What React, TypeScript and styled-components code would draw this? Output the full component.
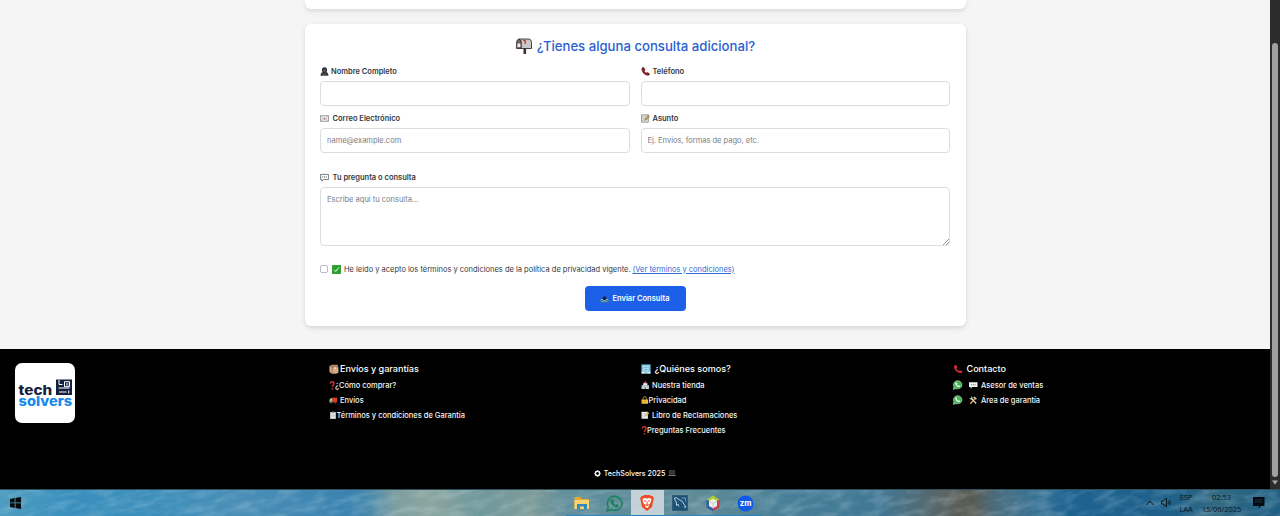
import React from "react";
import styled, { createGlobalStyle } from "styled-components";

const GlobalStyle = createGlobalStyle`
  * { box-sizing: border-box; }
  body { margin: 0; overflow: hidden; font-family: Inter, "Liberation Sans", sans-serif; }
  #root { height: 516px; }
`;

const Desktop = styled.div`
  display: flex;
  flex-direction: column;
  width: 1280px;
  height: 516px;
  overflow: hidden;
`;

const BrowserView = styled.div`
  display: flex;
  height: 489px;
`;

const Page = styled.main`
  display: flex;
  flex-direction: column;
  width: 1270px;
  height: 489px;
  overflow: hidden;
  background: #f5f5f5;
`;

const PreviousCard = styled.section`
  flex: none;
  width: 661px;
  height: 9px;
  margin: 0 0 15px 305px;
  background: #fff;
  border-radius: 0 0 6px 6px;
  box-shadow: 0 2px 5px rgba(0, 0, 0, 0.12);
`;

const FormCard = styled.section`
  flex: none;
  width: 661px;
  height: 302px;
  margin-left: 305px;
  padding: 11px 16px 0 15px;
  background: #fff;
  border-radius: 6px;
  box-shadow: 0 2px 5px rgba(0, 0, 0, 0.13);
`;

const FormTitle = styled.h2`
  display: flex;
  align-items: center;
  justify-content: center;
  gap: 5px;
  height: 21px;
  margin: 0 0 6px;
  padding-left: 1px;
  font-size: 13.15px;
  font-weight: 500;
  color: #2b5fd0;
  white-space: nowrap;
`;

const Fields = styled.div`
  display: grid;
  grid-template-columns: 1fr 1fr;
  column-gap: 11px;
`;

const Field = styled.label<{ $gap?: number }>`
  display: flex;
  flex-direction: column;
  margin-bottom: ${(p) => p.$gap ?? 3}px;
`;

const Caption = styled.span<{ $gap: number }>`
  display: flex;
  align-items: center;
  gap: ${(p) => p.$gap}px;
  height: 19px;
  padding-bottom: 1px;
  font-size: 7.5px;
  font-weight: 600;
  color: #34383d;
  white-space: nowrap;
`;

const Input = styled.input`
  height: 25px;
  padding: 0 6px;
  border: 1px solid #dadde0;
  border-radius: 4px;
  outline: none;
  background: #fff;
  font: 400 7.5px Inter, sans-serif;
  &::placeholder { color: #777d84; opacity: 1; }
`;

const TextArea = styled.textarea`
  height: 59px;
  padding: 6px;
  border: 1px solid #dadde0;
  border-radius: 4px;
  outline: none;
  resize: none;
  background: #fff;
  font: 400 7.5px/11px Inter, sans-serif;
  &::placeholder { color: #777d84; opacity: 1; }
`;

const AreaWrap = styled.div`
  position: relative;
  display: grid;
`;

const Grip = styled.svg`
  position: absolute;
  right: 1px;
  bottom: 1px;
`;

const Consent = styled.div`
  display: flex;
  align-items: center;
  height: 16px;
  margin-top: 15px;
  font-size: 7.5px;
  color: #33373b;
  white-space: nowrap;
`;

const CheckBox = styled.input`
  appearance: none;
  width: 8px;
  height: 8px;
  margin: 0 4px 0 0;
  border: 1px solid #b9bcc0;
  border-radius: 2px;
  background: #fff;
`;

const ConsentText = styled.span`
  margin-left: 3px;
`;

const TermsLink = styled.a`
  margin-left: 2px;
  color: #3069d4;
  text-decoration: underline;
`;

const SubmitButton = styled.button`
  display: flex;
  align-items: center;
  justify-content: center;
  gap: 3px;
  width: 101px;
  height: 25px;
  margin: 9px auto 0;
  padding: 0;
  border: 0;
  border-radius: 4px;
  background: #1d60e8;
  color: #fff;
  font: 600 7.5px Inter, sans-serif;
`;

const Footer = styled.footer`
  flex: none;
  display: flex;
  flex-direction: column;
  justify-content: space-between;
  height: 140px;
  margin-top: 23px;
  padding-top: 11.5px;
  background: #000;
  color: #fff;
`;

const FooterColumns = styled.div`
  display: grid;
  grid-template-columns: 313px 312px 312px 1fr;
  padding-left: 15.5px;
`;

const FooterColumn = styled.div`
  display: flex;
  flex-direction: column;
`;

const FooterHeading = styled.h3<{ $gap: number }>`
  display: flex;
  align-items: center;
  gap: ${(p) => p.$gap}px;
  height: 16px;
  margin: 0 0 1px;
  font-size: 9.05px;
  font-weight: 500;
  white-space: nowrap;
`;

const FooterLink = styled.a<{ $gap: number }>`
  display: flex;
  align-items: center;
  gap: ${(p) => p.$gap}px;
  height: 15.2px;
  color: #f4f4f4;
  font-size: 7.5px;
  font-weight: 500;
  white-space: nowrap;
`;

const Logo = styled.div`
  width: 60px;
  height: 60px;
  margin: 2.5px 0 0 -0.5px;
  border-radius: 7px;
  background: #fff;
`;

const Copyright = styled.div`
  display: flex;
  align-items: center;
  justify-content: center;
  gap: 3px;
  height: 14px;
  margin-bottom: 9px;
  font-size: 7.1px;
  font-weight: 500;
`;

const ScrollTrack = styled.div`
  display: flex;
  flex-direction: column;
  align-items: center;
  width: 10px;
  height: 489px;
  background: #2c2c2c;
`;

const ScrollThumb = styled.div`
  width: 6px;
  height: 434px;
  margin: 43px 0 3px;
  border-radius: 3px;
  background: #9f9f9f;
`;

const TaskBar = styled.div`
  position: relative;
  display: flex;
  height: 27px;
  border-top: 1px solid #31505f;
  background: linear-gradient(90deg, #4f9dc0 0, #398fbd 70px, #3f8fbb 170px, #4b8fb7 240px, #3a82b0 350px,
    #4a8aab 370px, #7d9fa0 395px, #8ba59f 430px, #6f989d 480px, #7f9c9a 530px, #5f8d9b 570px,
    #5f8a97 700px, #477f98 790px, #417794 880px, #5b6464 945px, #59594f 970px, #496f82 1000px,
    #3a7394 1035px, #1d6391 1070px, #1f6089 1180px, #346a82 1215px, #1e5e84 1280px);
`;

const Water = styled.svg`
  position: absolute;
  inset: 0;
`;

const Apps = styled.div`
  position: relative;
  display: flex;
  margin-left: 566px;
`;

const AppSlot = styled.div<{ $active?: boolean }>`
  display: flex;
  align-items: center;
  justify-content: center;
  width: 32.6px;
  height: 26px;
  background: ${(p) => (p.$active ? "rgba(225,232,235,0.75)" : "transparent")};
  box-shadow: ${(p) => (p.$active ? "inset 0 -1px #2581cf" : "inset 0 -1px rgba(30,125,200,0.75)")};
`;

const StartSlot = styled.div`
  position: absolute;
  left: 10px;
  top: 7px;
  display: flex;
`;

const Tray = styled.div`
  position: relative;
  display: flex;
  align-items: center;
  margin-left: auto;
  padding-right: 15px;
  color: #0b151b;
`;

const TrayText = styled.div<{ $width: number; $gap?: number }>`
  display: flex;
  flex-direction: column;
  align-items: center;
  width: ${(p) => p.$width}px;
  margin: -1px 0 0 ${(p) => p.$gap ?? 0}px;
  font: 400 7.4px/12px "Open Sans", sans-serif;
  white-space: nowrap;
`;

const drawings: Record<string, React.ReactNode> = {
  mailbox: (
    <>
      <path d="M7.500 10h2.600v6H7.500z" fill="#3d302a" />
      <path d="M3 1h10q2.500.5 2.500 3.500v6H5V4.500Q5 1.500 3 1z" fill="#c9c7c5" stroke="#34302f" strokeWidth=".9" />
      <path d="M3 1Q.6 1.500.6 4.500v6H5v-6Q5 1.500 3 1z" fill="#6b6462" stroke="#34302f" strokeWidth=".9" />
      <path d="M1.400 5.500h3v3.600h-3z" fill="#eee" />
      <path d="M7 3V1.800h3v4H8.400V3z" fill="#d84335" />
    </>
  ),
  person: (
    <>
      <path d="M3.400 7Q2.800.5 8 .5T12.600 7L11 9.500H5z" fill="#2b2d30" />
      <path d="M6 4.500h4v3L8 9 6 7.500z" fill="#64686c" />
      <path d="M1 15.500q0-6 5-6.500h4q5 .5 5 6.500z" fill="#2c3034" />
      <path d="m4 11.500 4 1.500 4-1.500M2 14.800h12" stroke="#767b80" fill="none" />
    </>
  ),
  phone: (
    <path
      d="M2 1.500 5 1l2.300 4.200-1.800 1.700Q7 9.500 9.500 11l1.800-1.500L15 12l-1 2.500Q9 16 4 10.500 0 5.500 2 1.500z"
      fill="#a51c27"
      stroke="#3f1115"
      strokeWidth="1"
    />
  ),
  redphone: (
    <path d="M2 2 5 1.500l2 4-1.700 1.600Q7 9.700 9.300 11.200l1.900-1.400L15 12l-1 2.400Q8.500 15.500 4 10.500.5 5.500 2 2z" fill="#d7282f" />
  ),
  envelope: (
    <>
      <path d="M.8 3h14.400v10H.8z" fill="#eceef0" stroke="#707377" strokeWidth="1.200" />
      <path d="m1 12.500 5-4M15 12.500l-5-4M1 3.500l7 5 7-5" fill="none" stroke="#a5a8ad" />
      <path d="M6.700 7.200h2.800v2.600H6.700z" fill="#ca5961" />
    </>
  ),
  memo: (
    <>
      <path d="M1 1.500h12v13H1z" fill="#e8e8e1" stroke="#686b68" strokeWidth="1.200" />
      <path d="M3 5h7M3 8h5M3 11h4" stroke="#999c9b" />
      <path d="m7 11 1-3 5-6 2.200 2-5 6z" fill="#d3a64c" stroke="#494236" strokeWidth=".7" />
    </>
  ),
  memoLight: (
    <>
      <path d="M1 1.500h12v13H1z" fill="#f1f1ec" />
      <path d="M3 5h7M3 8h5M3 11h4" stroke="#a5a8a8" />
      <path d="m7 11 1-3 5-6 2.200 2-5 6z" fill="#dca85a" />
    </>
  ),
  chat: (
    <>
      <path d="M1 2.500h14v9H6L3 14.500v-3H1z" fill="#fff" stroke="#4c5055" strokeWidth="1.300" />
      <path d="M4 6.200h1.800V8H4zM7.100 6.200h1.800V8H7.100zM10.200 6.200H12V8h-1.800z" fill="#4c5055" />
    </>
  ),
  check: (
    <>
      <path d="M.5.5h15v15H.5z" fill="#20a825" stroke="#176d1b" />
      <path d="m4 8.500 2.500 3L12 4.500" stroke="#fff" strokeWidth="1.700" fill="none" />
    </>
  ),
  outbox: (
    <>
      <path d="m2 9-1 2v3.500h14V11l-1-2z" fill="#7dbcd2" />
      <path d="M1 11h4l1 1.500h4L11 11h4v3.500H1z" fill="#28576d" />
      <path d="M8 3 3 8.500h2.500v2.500h5V8.500H13z" fill="#142742" />
      <path d="M2.500 13h11" stroke="#b8e5f2" />
    </>
  ),
  box: (
    <>
      <path d="M1 3 5 1h9l1 10-3 4H4l-3-2z" fill="#b8906b" />
      <path d="m1 3 4 2h10v9l-3 1H5l-4-3z" fill="#d4ab85" />
      <path d="M5 5v10M1 3l4 2h10" stroke="#80614c" fill="none" />
      <path d="M8.500 5h3v3h-3z" fill="#efd8b8" />
    </>
  ),
  question: (
    <>
      <path d="M2.500 4.500Q3 1.200 6 1.200t3.200 3C9.200 7 6.200 7 6.200 10.700" stroke="#d1342c" strokeWidth="2.500" fill="none" />
      <path d="M4.900 12.400h2.700v2.700H4.900z" fill="#d1342c" />
    </>
  ),
  truck: (
    <>
      <path d="M6 3h9.500v9H6z" fill="#dd3b20" />
      <path d="m1 7 2-3h3v8H1z" fill="#b1cabe" />
      <path d="M1 9h5v3H1z" fill="#779a4f" />
      <circle cx="4" cy="12.500" r="1.700" fill="#555" />
      <circle cx="12" cy="12.500" r="1.700" fill="#555" />
    </>
  ),
  clipboard: (
    <>
      <path d="M2 1.500h12v14H2z" fill="#b3a397" />
      <path d="M3.500 3h9v11.300h-9z" fill="#ecece9" />
      <path d="M6 .5h4v3H6z" fill="#888" />
      <path d="M5 6h6M5 8.500h6M5 11h6" stroke="#aaa" />
    </>
  ),
  office: (
    <>
      <path d="M.7.700h14.600v14.600H.7z" fill="#79c7e7" />
      <path d="M4 3h8v12H4z" fill="#c9e8f3" />
      <path d="M4 5.500h8M4 8.500h8M4 11.500h8M8 3v12" stroke="#5fa9cb" />
      <path d="M1 12.500h3v2.500H1zM12 12.500h3v2.500h-3z" fill="#e7f3f7" />
    </>
  ),
  store: (
    <>
      <path d="M1 8h14v7H1z" fill="#c7d7de" />
      <path d="M4 4h8v11H4z" fill="#eceaf0" />
      <path d="M6.500 1h3.500v3H6.500z" fill="#df5967" />
      <path d="M1 8.500h14M3 11.500h10" stroke="#6c8ba0" />
      <path d="M6.500 12h3v3h-3z" fill="#4e6b88" />
    </>
  ),
  lock: (
    <>
      <path d="M4 7V4.500Q4 1 7.500 1T11 4.500V7" stroke="#c39a39" strokeWidth="1.800" fill="none" />
      <path d="M1 6.500h13v8.500H1z" fill="#f4bd34" />
      <path d="M7 9h1.500v3H7z" fill="#c18a21" />
    </>
  ),
  talk: (
    <>
      <path d="M0 2.500h16v9H6L3 14.500v-3H0z" fill="#f5f5f5" />
      <path d="M4 6.200h1.600v1.600H4zM7.200 6.200h1.600v1.600H7.200zM10.400 6.200H12v1.600h-1.600z" fill="#555" />
    </>
  ),
  tools: (
    <>
      <path d="m2.500 14.500 9-10" stroke="#e5a22c" strokeWidth="2.600" />
      <path d="m7.500 3 3-2L15 5l-2 2z" fill="#c2c8cc" />
      <path d="m4 4 9.500 10" stroke="#d8dde0" strokeWidth="2.400" />
      <path d="M.5 3.500 3 4.500 4.500 3 3.500.5 7 3 5.500 7 2 6z" fill="#d1d5d7" />
    </>
  ),
  whatsapp: (
    <>
      <path d="m1 15 1-4Q0 6 3.500 2.700 7-.2 11.700 2 16 5 14.600 9.800 12.400 15.200 5 13.800z" fill="#42b854" stroke="#b8e5bf" strokeWidth="1" />
      <path d="M5 4.300 6.500 4l1 2.300-.8 1 2.400 2.100 1-.9 2 1.100q-.5 2-2.200 1.800-4.500-1-5.600-5.200Q4.200 5 5 4.300z" fill="#fff" />
    </>
  ),
  gear: (
    <>
      <circle cx="8" cy="8" r="5" fill="none" stroke="#eee" strokeWidth="3.200" />
      <path d="M8 .5v4M8 11.500v4M.5 8h4M11.500 8h4M2.700 2.700l3 3M10.300 10.300l3 3M13.300 2.700l-3 3M5.700 10.300l-3 3" stroke="#eee" strokeWidth="1.600" />
    </>
  ),
  laptop: (
    <>
      <path d="M2.500 3h11v7.500h-11z" fill="#333537" stroke="#625d5a" />
      <path d="M.5 12h15v2H.5z" fill="#7d7672" />
    </>
  ),
};

function Emoji({ name, size = 9, box = "0 0 16 16", width }: { name: string; size?: number; box?: string; width?: number }) {
  return (
    <svg width={width ?? size} height={size} viewBox={box} aria-hidden="true">
      {drawings[name]}
    </svg>
  );
}

function LogoArt() {
  return (
    <svg width="60" height="60" viewBox="0 0 60 60">
      <g fontFamily="Inter, sans-serif" fontWeight="800">
        <text x="3.600" y="31.800" fontSize="13" fill="#15203f" textLength="33.500" lengthAdjust="spacingAndGlyphs">tech</text>
        <text x="3.600" y="43.200" fontSize="13" fill="#1689ee" textLength="53.500" lengthAdjust="spacingAndGlyphs">solvers</text>
      </g>
      <path d="M41 16.500h16v15.500H41z" fill="#15203f" />
      <path d="M44 17v4.500h3.500M54.500 18.700h-5v5h5zM43.500 25h11M44 29h7.500M53.700 27.500v3" stroke="#fff" strokeWidth="1" fill="none" />
      <path d="M51 20h2.600v2.700H51z" fill="#8790a5" />
    </svg>
  );
}

const footerLists = [
  {
    title: "Envíos y garantías", icon: "box", size: 10, gap: 1.5,
    links: [
      { icon: "question", text: "¿Cómo comprar?", gap: 0 },
      { icon: "truck", text: "Envíos", gap: 3 },
      { icon: "clipboard", text: "Términos y condiciones de Garantía", gap: 0 },
    ],
  },
  {
    title: "¿Quiénes somos?", icon: "office", size: 10, gap: 4,
    links: [
      { icon: "store", text: "Nuestra tienda", gap: 3 },
      { icon: "lock", text: "Privacidad", gap: 0 },
      { icon: "memoLight", text: "Libro de Reclamaciones", gap: 3 },
      { icon: "question", text: "Preguntas Frecuentes", gap: 0 },
    ],
  },
];

export default function App() {
  return (
    <Desktop>
      <GlobalStyle />
      <BrowserView>
        <Page>
          <PreviousCard />
          <FormCard>
            <FormTitle><Emoji name="mailbox" size={16} />¿Tienes alguna consulta adicional?</FormTitle>
            <Fields>
              <Field>
                <Caption $gap={2}><Emoji name="person" />Nombre Completo</Caption>
                <Input />
              </Field>
              <Field>
                <Caption $gap={3}><Emoji name="phone" />Teléfono</Caption>
                <Input />
              </Field>
              <Field $gap={15}>
                <Caption $gap={3.5}><Emoji name="envelope" />Correo Electrónico</Caption>
                <Input placeholder="name@example.com" />
              </Field>
              <Field $gap={15}>
                <Caption $gap={3}><Emoji name="memo" />Asunto</Caption>
                <Input placeholder="Ej. Envíos, formas de pago, etc." />
              </Field>
            </Fields>
            <Field $gap={0}>
              <Caption $gap={3.5}><Emoji name="chat" />Tu pregunta o consulta</Caption>
              <AreaWrap>
                <TextArea placeholder="Escribe aquí tu consulta..." />
                <Grip width="6" height="6" viewBox="0 0 6 6"><path d="m0 6 6-6M3 6l3-3" stroke="#777" strokeWidth=".8" /></Grip>
              </AreaWrap>
            </Field>
            <Consent>
              <CheckBox type="checkbox" />
              <Emoji name="check" />
              <ConsentText>He leído y acepto los términos y condiciones de la política de privacidad vigente.</ConsentText>
              <TermsLink>(Ver términos y condiciones)</TermsLink>
            </Consent>
            <SubmitButton><Emoji name="outbox" />Enviar Consulta</SubmitButton>
          </FormCard>
          <Footer>
            <FooterColumns>
              <Logo><LogoArt /></Logo>
              {footerLists.map((list) => (
                <FooterColumn key={list.title}>
                  <FooterHeading $gap={list.gap}><Emoji name={list.icon} size={list.size} />{list.title}</FooterHeading>
                  {list.links.map((link) => (
                    <FooterLink key={link.text} $gap={link.gap}>
                      {link.icon === "question"
                        ? <Emoji name="question" size={9} width={6.5} box="1 0 10 16" />
                        : link.icon === "lock" || link.icon === "clipboard"
                          ? <Emoji name={link.icon} size={8.5} width={8} />
                          : <Emoji name={link.icon} size={8.5} />}
                      {link.text}
                    </FooterLink>
                  ))}
                </FooterColumn>
              ))}
              <FooterColumn>
                <FooterHeading $gap={4}><Emoji name="redphone" size={10} />Contacto</FooterHeading>
                <FooterLink $gap={3.5}><Emoji name="whatsapp" size={10} width={13} box="3 0 16 16" /><Emoji name="talk" size={8.5} />Asesor de ventas</FooterLink>
                <FooterLink $gap={3.5}><Emoji name="whatsapp" size={10} width={13} box="3 0 16 16" /><Emoji name="tools" size={8.5} />Área de garantía</FooterLink>
              </FooterColumn>
            </FooterColumns>
            <Copyright><Emoji name="gear" size={7} />TechSolvers 2025<Emoji name="laptop" size={8} /></Copyright>
          </Footer>
        </Page>
        <ScrollTrack>
          <ScrollThumb />
          <svg width="6" height="5" viewBox="0 0 6 5"><path d="M0 .5h6L3 4.500z" fill="#aaa" /></svg>
        </ScrollTrack>
      </BrowserView>
      <TaskBar>
        <Water width="1280" height="26" viewBox="0 0 1280 26">
          <defs>
            <filter id="ripples" x="0" y="0" width="100%" height="100%">
              <feTurbulence type="fractalNoise" baseFrequency=".045 .13" numOctaves="4" seed="8" />
              <feColorMatrix values="0 0 0 0 .72  0 0 0 0 .85  0 0 0 0 .9  1.600 0 0 0 -.66" />
            </filter>
          </defs>
          <g transform="rotate(-12 640 13)">
            <rect x="-20" y="-160" width="1320" height="340" filter="url(#ripples)" opacity=".32" />
          </g>
        </Water>
        <StartSlot>
          <svg width="11" height="12" viewBox="0 0 11 12"><path d="M0 2 4.700 1v4.500H0zM5.500.9 11 0v5.500H5.500zM0 6.300h4.700v4.600L0 10zM5.500 6.300H11V12l-5.500-1z" fill="#050a0d" /></svg>
        </StartSlot>
        <Apps>
          <AppSlot>
            <svg width="16" height="14" viewBox="0 0 16 14"><path d="M.5 1h6l1 2H15v10H.5z" fill="#e6aa32" /><path d="M.5 4H15v9H.5z" fill="#f6d571" /><path d="M3 13V8h10v5h-3v-2.500H6V13z" fill="#3289bb" /></svg>
          </AppSlot>
          <AppSlot>
            <svg width="17" height="17" viewBox="0 0 17 17" fill="none" stroke="#188357"><path d="m1 16 1.200-4Q-.2 7 3.600 3.200q4-3.400 9-.6Q17.400 6.300 15.600 11q-3 6-10.400 3.700z" strokeWidth="1.500" /><path d="M5.500 4.600 6.900 4.500l1 2.400-.8 1 2.600 2.300 1-.9 2 1.100q-.4 2-2.400 1.700-4-1-5.700-5.400.1-1.500.9-2.100z" fill="#188357" strokeWidth=".4" /></svg>
          </AppSlot>
          <AppSlot $active>
            <svg width="14" height="16" viewBox="0 0 14 16"><path d="m4 0-1 1H1.500L0 3.500l.5 1L2 12l5 4 5-4 1.500-7.500.5-1L12.500 1H11l-1-1z" fill="#ed4c28" /><path d="m2.500 4 2-.9L7 3.500l2.500-.4 2 .9-.6 2.500-1 2.500-1.400.5.5 2L7 13l-2-1.500.5-2L4 9 3 6.500z" fill="#fff" /><path d="m4 5.600 2 .6M10 5.600l-2 .6M7 6v3l-1.200.6M7 9l1.200.6M5.500 10.500h3" stroke="#ed4c28" strokeWidth=".9" fill="none" /></svg>
          </AppSlot>
          <AppSlot>
            <svg width="16" height="16" viewBox="0 0 16 16"><path d="M.5.500h15v15H.5z" fill="#1f5177" stroke="#315c77" /><path d="M2.500 3q2-1.200 3.500 1 5 1.500 6.500 6l1.500 2-2 .3M2.500 3q.2 2.500 1.800 4l.2 3.500 1.300-1.500 1 2.500" stroke="#b7d3df" strokeWidth="1" fill="none" /><path d="M9.500 3h4v3.500" stroke="#6f9db4" fill="none" /></svg>
          </AppSlot>
          <AppSlot>
            <svg width="16" height="17" viewBox="0 0 16 17"><path d="m8 .5 6.500 4L8 8.500 1.500 4.500z" fill="#aecb38" /><path d="M1.500 4.500 8 8.500v8l-6.500-4z" fill="#315fa1" /><path d="m14.500 4.500-6.500 4v8l6.500-4z" fill="#c64252" /><path d="m8 3.800 4 2.300v4.800l-4 2.400-4-2.400V6.100z" fill="#eff1e8" /><path d="m4 6.100 4 2.300 4-2.300M8 8.400v4.900" stroke="#bfcfce" fill="none" /></svg>
          </AppSlot>
          <AppSlot>
            <svg width="17" height="17" viewBox="0 0 17 17"><circle cx="8.500" cy="8.500" r="8" fill="#1159e9" /><text x="2.700" y="11" fill="#fff" fontFamily="Inter, sans-serif" fontWeight="700" fontSize="7.600" textLength="11.800" lengthAdjust="spacingAndGlyphs">zm</text></svg>
          </AppSlot>
        </Apps>
        <Tray>
          <svg width="8" height="6" viewBox="0 0 8 6"><path d="m.5 5 3.500-4 3.500 4" fill="none" stroke="#081218" /></svg>
          <svg width="20" height="12" viewBox="-7 0 20 12" fill="none" stroke="#081218" strokeWidth=".9"><path d="M.5 4h2l3-3v9l-3-3h-2zM7 4q1 1.500 0 3M8.500 2.800q1.800 2.700 0 5.400" /></svg>
          <TrayText $width={24}><span>ESP</span><span>LAA</span></TrayText>
          <TrayText $width={39} $gap={4}><span>02:53</span><span>15/06/2025</span></TrayText>
          <svg width="24" height="12" viewBox="-12 0 24 12"><path d="M0 0h11.500v9H8L5.800 11.500V9H0z" fill="#050b10" /><path d="M2 2.800h7.500M2 5h7.500" stroke="#24495d" strokeWidth=".7" /></svg>
        </Tray>
      </TaskBar>
    </Desktop>
  );
}
